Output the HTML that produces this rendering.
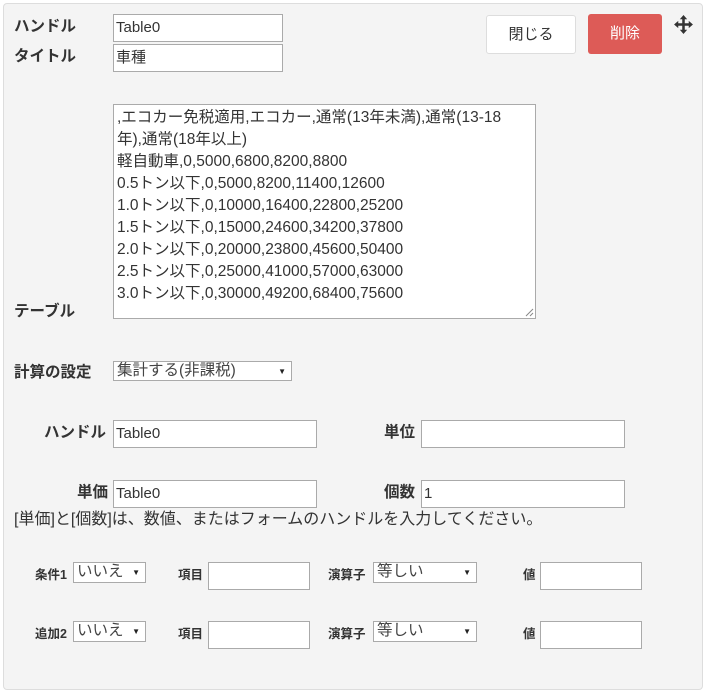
<!DOCTYPE html>
<html><head><meta charset="utf-8"><style>
*{box-sizing:border-box}
body{margin:0;width:706px;height:693px;background:#fff;font-family:"Liberation Sans","Noto Sans CJK JP",sans-serif;color:#333;font-size:15px;position:relative;overflow:hidden}
.panel{position:absolute;left:3px;top:3px;width:700px;height:687px;background:#f4f4f4;border:1px solid #ddd;border-radius:4px}
.a{position:absolute}
.lbl{position:absolute;font-weight:bold;font-size:15.5px;line-height:20px;white-space:nowrap}
.sl{position:absolute;font-weight:bold;font-size:12.5px;line-height:16px;white-space:nowrap}
.in{position:absolute;background:#fff;border:1px solid #aaa;font-size:15px;line-height:25px;padding-left:2px;white-space:nowrap}
.sel{position:absolute;background:#fff;border:1px solid #aaa;font-size:15.5px;line-height:18px;padding-left:3px;white-space:nowrap;color:#444}
.sel:after{content:"▼";position:absolute;right:5px;top:1px;font-size:8px;color:#222}
.ta{position:absolute;left:113px;top:104px;width:423px;height:215px;background:#fff;border:1px solid #aaa;padding:2px 3px;font-size:15.5px;line-height:22px;color:#333;white-space:nowrap}
</style></head><body>
<div class="panel"></div>
<div class="lbl" style="left:14px;top:17px">ハンドル</div>
<div class="in" style="left:113px;top:14px;width:170px;height:28px">Table0</div>
<div class="lbl" style="left:14px;top:47px">タイトル</div>
<div class="in" style="left:113px;top:44px;width:170px;height:28px">車種</div>
<div class="a" style="left:486px;top:15px;width:90px;height:39px;background:#fff;border:1px solid #ddd;border-radius:3px;text-align:center;line-height:37px;font-size:15px;color:#333">閉じる</div>
<div class="a" style="left:588px;top:14px;width:74px;height:40px;background:#dd5b57;border-radius:3px;text-align:center;line-height:40px;font-size:15px;color:#fff">削除</div>
<svg class="a" style="left:673px;top:14px" width="21" height="21" viewBox="0 0 20 20"><path d="M10 1l3.5 4h-2.3v3.8H15V6.5l4 3.5-4 3.5v-2.3h-3.8V15h2.3L10 19l-3.5-4h2.3v-3.8H5v2.3L1 10l4-3.5v2.3h3.8V5H6.5z" fill="#333"/></svg>
<div class="ta">,エコカー免税適用,エコカー,通常(13年未満),通常(13-18<br>年),通常(18年以上)<br>軽自動車,0,5000,6800,8200,8800<br>0.5トン以下,0,5000,8200,11400,12600<br>1.0トン以下,0,10000,16400,22800,25200<br>1.5トン以下,0,15000,24600,34200,37800<br>2.0トン以下,0,20000,23800,45600,50400<br>2.5トン以下,0,25000,41000,57000,63000<br>3.0トン以下,0,30000,49200,68400,75600
<svg style="position:absolute;right:1px;bottom:1px" width="9" height="9"><path d="M8 1L1 8M8 5L5 8" stroke="#888" stroke-width="1"/></svg></div>
<div class="lbl" style="left:14px;top:302px">テーブル</div>
<div class="lbl" style="left:14px;top:363px">計算の設定</div>
<div class="sel" style="left:113px;top:361px;width:179px;height:20px">集計する(非課税)</div>
<div class="lbl" style="left:44px;top:423px">ハンドル</div>
<div class="in" style="left:113px;top:420px;width:204px;height:28px">Table0</div>
<div class="lbl" style="left:384px;top:423px">単位</div>
<div class="in" style="left:421px;top:420px;width:204px;height:28px"></div>
<div class="lbl" style="left:77px;top:483px">単価</div>
<div class="in" style="left:113px;top:480px;width:204px;height:28px">Table0</div>
<div class="lbl" style="left:384px;top:483px">個数</div>
<div class="in" style="left:421px;top:480px;width:204px;height:28px">1</div>
<div class="a" style="left:14px;top:510px;font-size:16px;line-height:20px;white-space:nowrap">[単価]と[個数]は、数値、またはフォームのハンドルを入力してください。</div>
<div class="sl" style="left:35px;top:567px">条件1</div>
<div class="sel" style="left:73px;top:562px;width:73px;height:21px">いいえ</div>
<div class="sl" style="left:178px;top:567px">項目</div>
<div class="in" style="left:208px;top:562px;width:102px;height:28px"></div>
<div class="sl" style="left:328px;top:567px">演算子</div>
<div class="sel" style="left:373px;top:562px;width:104px;height:21px">等しい</div>
<div class="sl" style="left:523px;top:567px">値</div>
<div class="in" style="left:540px;top:562px;width:102px;height:28px"></div>
<div class="sl" style="left:35px;top:626px">追加2</div>
<div class="sel" style="left:73px;top:621px;width:73px;height:21px">いいえ</div>
<div class="sl" style="left:178px;top:626px">項目</div>
<div class="in" style="left:208px;top:621px;width:102px;height:28px"></div>
<div class="sl" style="left:328px;top:626px">演算子</div>
<div class="sel" style="left:373px;top:621px;width:104px;height:21px">等しい</div>
<div class="sl" style="left:523px;top:626px">値</div>
<div class="in" style="left:540px;top:621px;width:102px;height:28px"></div>
</body></html>
